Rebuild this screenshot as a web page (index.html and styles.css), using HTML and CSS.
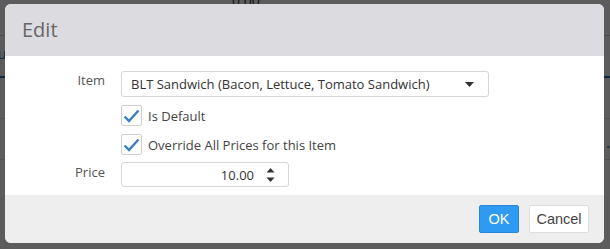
FILE: index.html
```html
<!DOCTYPE html>
<html lang="en">
<head>
  <meta charset="UTF-8" />
  <title>Edit Item Price</title>
  <link rel="stylesheet" href="styles.css">
</head>
<body>

<!-- page behind the modal -->
<div class="page">
  <div class="page-top"><span class="ghost-num">0.00</span></div>
  <div class="page-row tab-row"><span class="ghost-tab">Value</span></div>
  <div class="page-row"></div>
  <div class="page-row"><span class="ghost-right">1.0</span></div>
</div>

<div class="backdrop"></div>

<div class="modal">
  <div class="modal-header">Edit</div>

  <div class="modal-body">
    <div class="form-row">
      <label class="form-label">Item</label>
      <div class="select-box">
        <span>BLT Sandwich (Bacon, Lettuce, Tomato Sandwich)</span>
        <svg class="caret" width="9" height="5" viewBox="0 0 9 5"><path d="M0 0h9L4.5 5z" fill="#333"/></svg>
      </div>
    </div>

    <div class="form-row">
      <span class="form-label"></span>
      <label class="check">
        <span class="check-box">
          <svg width="17" height="14" viewBox="0 0 17 14"><path d="M1.5 7.5l4.5 4.5L15.5 1.5" fill="none" stroke="#3a7fc1" stroke-width="2.4"/></svg>
        </span>
        Is Default
      </label>
    </div>

    <div class="form-row">
      <span class="form-label"></span>
      <label class="check">
        <span class="check-box">
          <svg width="17" height="14" viewBox="0 0 17 14"><path d="M1.5 7.5l4.5 4.5L15.5 1.5" fill="none" stroke="#3a7fc1" stroke-width="2.4"/></svg>
        </span>
        Override All Prices for this Item
      </label>
    </div>

    <div class="form-row">
      <label class="form-label">Price</label>
      <div class="number-box">
        <span class="number-value">10.00</span>
        <svg class="spin" width="9" height="16" viewBox="0 0 9 16"><path d="M4.5 1L8.5 5.5h-8z" fill="#333"/><path d="M0.5 10.5h8L4.5 15z" fill="#333"/></svg>
      </div>
    </div>
  </div>

  <div class="modal-footer">
    <button class="btn btn-primary">OK</button>
    <button class="btn btn-cancel">Cancel</button>
  </div>
</div>

</body>
</html>
```

FILE: styles.css
```css
body {
  margin: 0;
  width: 610px;
  height: 249px;
  overflow: hidden;
  background: #fff;
  font-family: "Open Sans", "Noto Sans", sans-serif;
  position: relative;
}

.page {
  height: 249px;
}

.page-top {
  height: 44px;
  border-bottom: 1px solid #ccc;
}

.ghost-num {
  display: block;
  padding-left: 232px;
  margin-top: -9px;
  font-size: 14px;
  color: #333;
}

.page-row {
  height: 40px;
  border-bottom: 1px solid #ddd;
}

.tab-row {
  border-bottom: 2px solid #2a6db0;
}

.ghost-tab {
  display: block;
  margin-left: -22px;
  padding-top: 8px;
  font-size: 14px;
  color: #2a6db0;
}

.ghost-right {
  display: block;
  text-align: right;
  margin-right: -8px;
  padding-top: 14px;
  font-size: 14px;
  color: #333;
}

.backdrop {
  position: absolute;
  inset: 0;
  background: rgba(0, 0, 0, 0.64);
}

.modal {
  position: absolute;
  left: 5px;
  top: 4px;
  width: 599px;
  height: 239px;
  background: #fff;
  border-radius: 6px;
  overflow: hidden;
  display: flex;
  flex-direction: column;
}

.modal-header {
  height: 52px;
  box-sizing: border-box;
  background: #dcdce0;
  color: #666;
  font-size: 20px;
  padding: 12px 17px 0;
}

.modal-body {
  flex: 1;
  padding-top: 15px;
  display: flex;
  flex-direction: column;
  gap: 8px;
  color: #444;
  font-size: 13px;
}

.form-row {
  display: flex;
  align-items: center;
  gap: 16px;
}

.form-label {
  width: 100px;
  text-align: right;
  color: #555;
  align-self: flex-start;
  line-height: 17px;
  padding-top: 1px;
}

.select-box {
  width: 368px;
  height: 26px;
  box-sizing: border-box;
  border: 1px solid #d6d6d6;
  border-radius: 3px;
  display: flex;
  align-items: center;
  justify-content: space-between;
  padding: 0 14px 0 9px;
  color: #333;
}

.check {
  display: flex;
  align-items: center;
  gap: 6px;
  height: 21px;
  color: #444;
}

.check-box {
  width: 21px;
  height: 21px;
  box-sizing: border-box;
  border: 1px solid #d0d0d0;
  border-radius: 2px;
  display: flex;
  align-items: center;
  justify-content: center;
}

.number-box {
  width: 168px;
  height: 25px;
  box-sizing: border-box;
  border: 1px solid #d6d6d6;
  border-radius: 3px;
  display: flex;
  align-items: center;
  justify-content: flex-end;
  padding-right: 13px;
  margin-top: -1px;
  color: #333;
}

.number-value {
  margin-right: 12px;
}

.modal-footer {
  height: 48px;
  box-sizing: border-box;
  background: #eee;
  display: flex;
  justify-content: flex-end;
  align-items: flex-start;
  gap: 10px;
  padding: 10px 15px 0;
}

.btn {
  height: 28px;
  padding: 0;
  font-family: "Liberation Sans", Arial, sans-serif;
  font-size: 14.5px;
  color: #444;
  background: #fff;
  border: 1px solid #ddd;
  border-radius: 2px;
}

.btn-primary {
  width: 40px;
  background: #2f9af2;
  border-color: #2a86d6;
  color: #fff;
}

.btn-cancel {
  width: 60px;
}
```
